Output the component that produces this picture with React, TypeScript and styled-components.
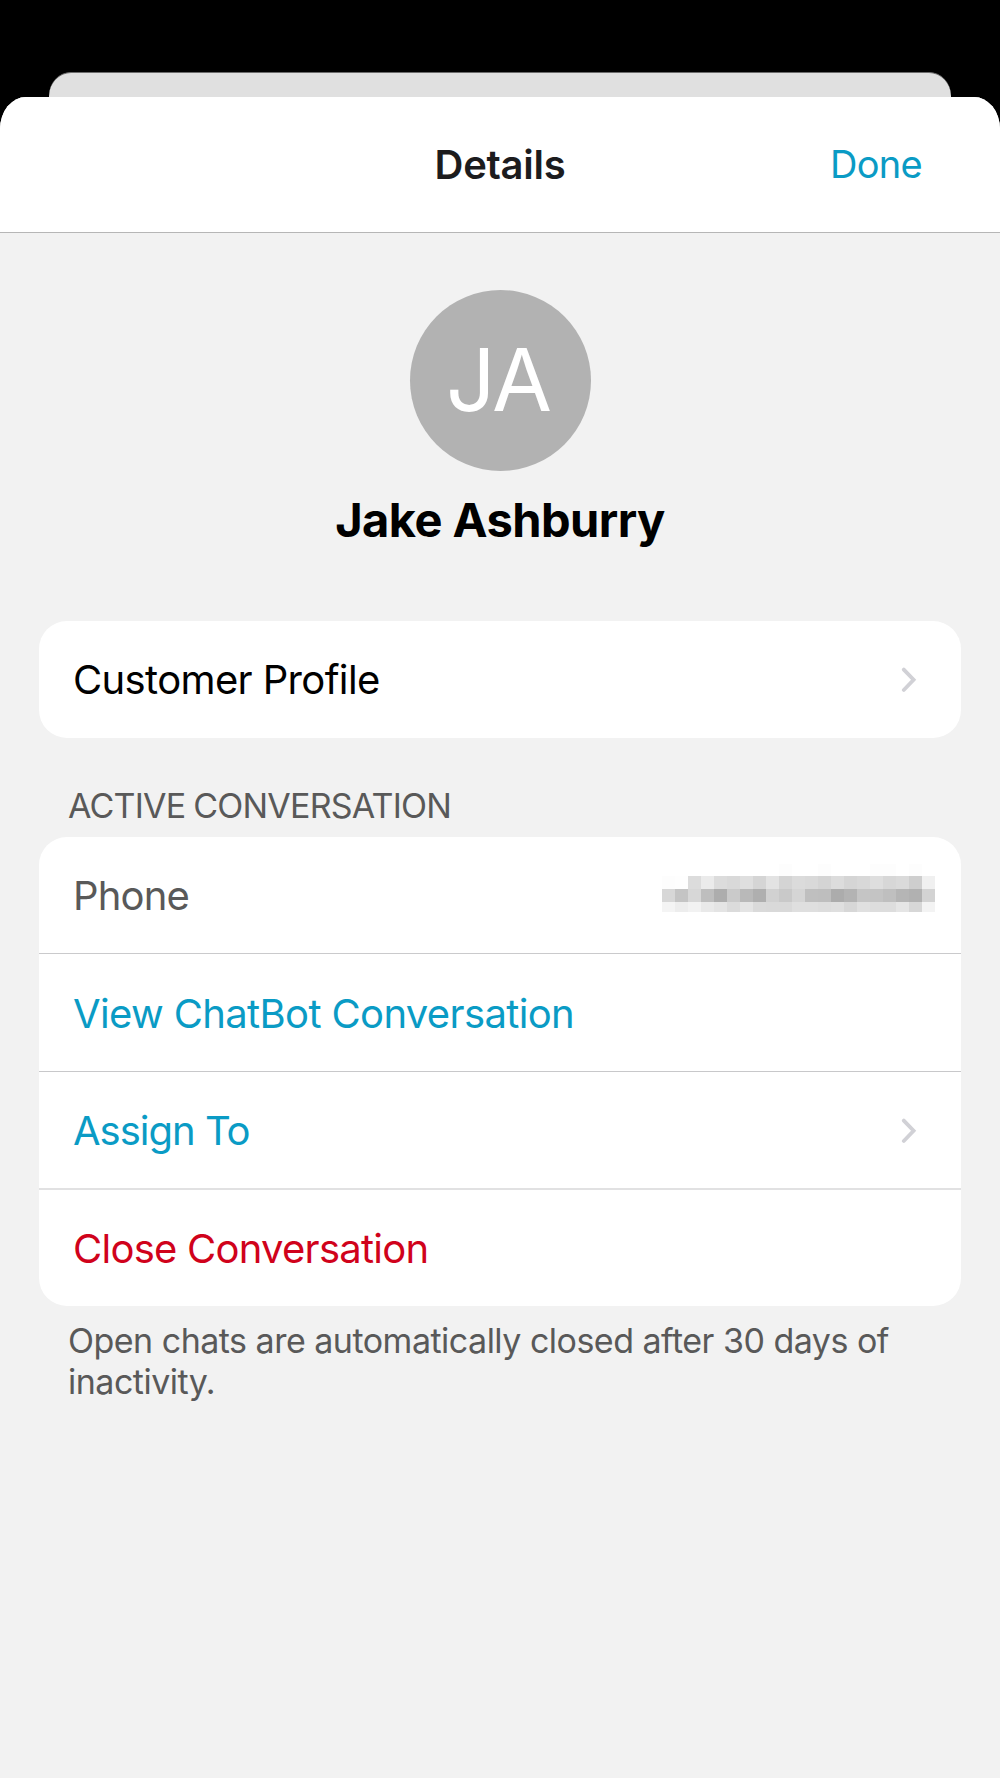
import React from "react";
import styled, { createGlobalStyle } from "styled-components";

const GlobalStyle = createGlobalStyle`
  *, *::before, *::after { box-sizing: border-box; }
  html, body { margin: 0; padding: 0; background: #000; }
  body { font-family: Inter, "Liberation Sans", sans-serif; font-feature-settings: "calt" 0; }
  h1, h2, h3, p { margin: 0; font-weight: inherit; }
  button { border: 0; background: none; padding: 0; margin: 0; font-family: inherit; }
`;

const Screen = styled.div`
  width: 1000px;
  height: 1778px;
  padding-top: 72px;
  display: flex;
  flex-direction: column;
  background: #000;
  overflow: hidden;
`;

const BackSheet = styled.div`
  flex: none;
  height: 58px;
  margin: 0 49px -33px;
  border-top: 1px solid #6c6c6c;
  border-radius: 22px 22px 0 0 / 24px 24px 0 0;
  background: #e0e0e0;
`;

const Sheet = styled.main`
  flex: 1;
  display: flex;
  flex-direction: column;
  border-radius: 26px 26px 0 0 / 32px 32px 0 0;
  background: #f2f2f2;
  overflow: hidden;
  position: relative;
`;

const NavBar = styled.header`
  flex: none;
  display: grid;
  grid-template-columns: 1fr auto 1fr;
  align-items: center;
  height: 136px;
  padding: 0 78px;
  border-bottom: 1px solid #b6b6b6;
  background: #fff;
`;

const NavTitle = styled.h1`
  grid-column: 2;
  font-size: 40px;
  font-weight: 600;
  line-height: 48px;
  letter-spacing: -0.25px;
  color: #1c1c1e;
`;

const NavAction = styled.button`
  justify-self: end;
  padding-bottom: 2px;
  font-size: 38px;
  font-weight: 400;
  line-height: 46px;
  letter-spacing: -0.7px;
  color: #0a9bc5;
`;

const Profile = styled.section`
  flex: none;
  display: flex;
  flex-direction: column;
  align-items: center;
  height: 388px;
  padding-top: 57px;
`;

const Avatar = styled.div`
  flex: none;
  display: flex;
  align-items: center;
  justify-content: center;
  width: 181px;
  height: 181px;
  margin-left: 1px;
  padding: 0 5px 1px 0;
  border-radius: 50%;
  background: #b2b2b2;
  font-size: 87px;
  line-height: 100px;
  letter-spacing: -2px;
  color: #fff;
`;

const Name = styled.h2`
  margin-top: 20px;
  font-size: 47px;
  font-weight: 700;
  line-height: 58px;
  letter-spacing: -0.55px;
  color: #000;
`;

const Card = styled.section`
  flex: none;
  margin: 0 39px;
  border-radius: 28px;
  background: #fff;
  overflow: hidden;
`;

const tones = {
  primary: { color: "#000", spacing: "-0.63px" },
  muted: { color: "#595959", spacing: "-0.8px" },
  link: { color: "#0a9bc5", spacing: "-0.64px" },
  compactLink: { color: "#0a9bc5", spacing: "-1px" },
  danger: { color: "#d0021b", spacing: "-0.75px" },
};

const Row = styled.div<{ $height: number; $divider?: string }>`
  display: flex;
  align-items: center;
  justify-content: space-between;
  height: ${(p) => p.$height}px;
  padding: 2px 44px 0 34px;
  ${(p) => p.$divider && `border-bottom: ${p.$divider};`}
`;

const RowLabel = styled.span<{ $tone: keyof typeof tones }>`
  font-size: 40px;
  line-height: 48px;
  white-space: nowrap;
  color: ${(p) => tones[p.$tone].color};
  letter-spacing: ${(p) => tones[p.$tone].spacing};
`;

const SectionTitle = styled.h3`
  flex: none;
  height: 99px;
  padding: 47px 0 0 68px;
  font-size: 34px;
  line-height: 41px;
  letter-spacing: -0.78px;
  word-spacing: -1px;
  color: #595959;
`;

const Footnote = styled.p`
  width: 860px;
  margin: 13.5px 0 0 68px;
  font-size: 34px;
  line-height: 41px;
  letter-spacing: -0.51px;
  color: #595959;
`;

const Redaction = styled.div`
  display: grid;
  grid-template-columns: repeat(21, 13px);
  grid-template-rows: 12px 13px 13px 10px;
  margin: -16px -18px 0 0;
`;

const Cell = styled.i<{ $shade: string }>`
  background: #${(p) => p.$shade.repeat(3)};
`;

const shades = [
  "ff ff ff ff ff ff ff ff ff fd ff ff fd ff ff ff fd fd ff fd ff",
  "fd fe dc eb dc d9 df d5 e3 d4 db d9 d4 dc d5 d8 de d7 da ce f0",
  "d7 c4 d7 be ad ca b9 af d1 c9 d5 bf be ac b3 c5 c4 bf b5 b1 d3",
  "f4 ed f2 e9 e4 db e4 da d9 d9 df df dd df d7 e0 dd dd e5 d7 f3",
].flatMap((line) => line.split(" "));

const Chevron = () => (
  <svg width="16" height="26" viewBox="0 0 16 26" fill="none" aria-hidden="true">
    <path d="M2.8 2.6 12.6 12.8 2.8 23" stroke="#d1d1d6" strokeWidth="3.8" strokeLinecap="round" />
  </svg>
);

export default function App() {
  return (
    <Screen>
      <GlobalStyle />
      <BackSheet />
      <Sheet>
        <NavBar>
          <NavTitle>Details</NavTitle>
          <NavAction>Done</NavAction>
        </NavBar>
        <Profile>
          <Avatar>JA</Avatar>
          <Name>Jake Ashburry</Name>
        </Profile>
        <Card>
          <Row $height={116.5}>
            <RowLabel $tone="primary">Customer Profile</RowLabel>
            <Chevron />
          </Row>
        </Card>
        <SectionTitle>ACTIVE CONVERSATION</SectionTitle>
        <Card>
          <Row $height={117.5} $divider="1px solid #cacacc">
            <RowLabel $tone="muted">Phone</RowLabel>
            <Redaction>
              {shades.map((shade, i) => (
                <Cell key={i} $shade={shade} />
              ))}
            </Redaction>
          </Row>
          <Row $height={118} $divider="1px solid #c8c8ca">
            <RowLabel $tone="link">View ChatBot Conversation</RowLabel>
          </Row>
          <Row $height={118} $divider="2px solid #e1e1e2">
            <RowLabel $tone="compactLink">Assign To</RowLabel>
            <Chevron />
          </Row>
          <Row $height={116}>
            <RowLabel $tone="danger">Close Conversation</RowLabel>
          </Row>
        </Card>
        <Footnote>Open chats are automatically closed after 30 days of inactivity.</Footnote>
      </Sheet>
    </Screen>
  );
}
